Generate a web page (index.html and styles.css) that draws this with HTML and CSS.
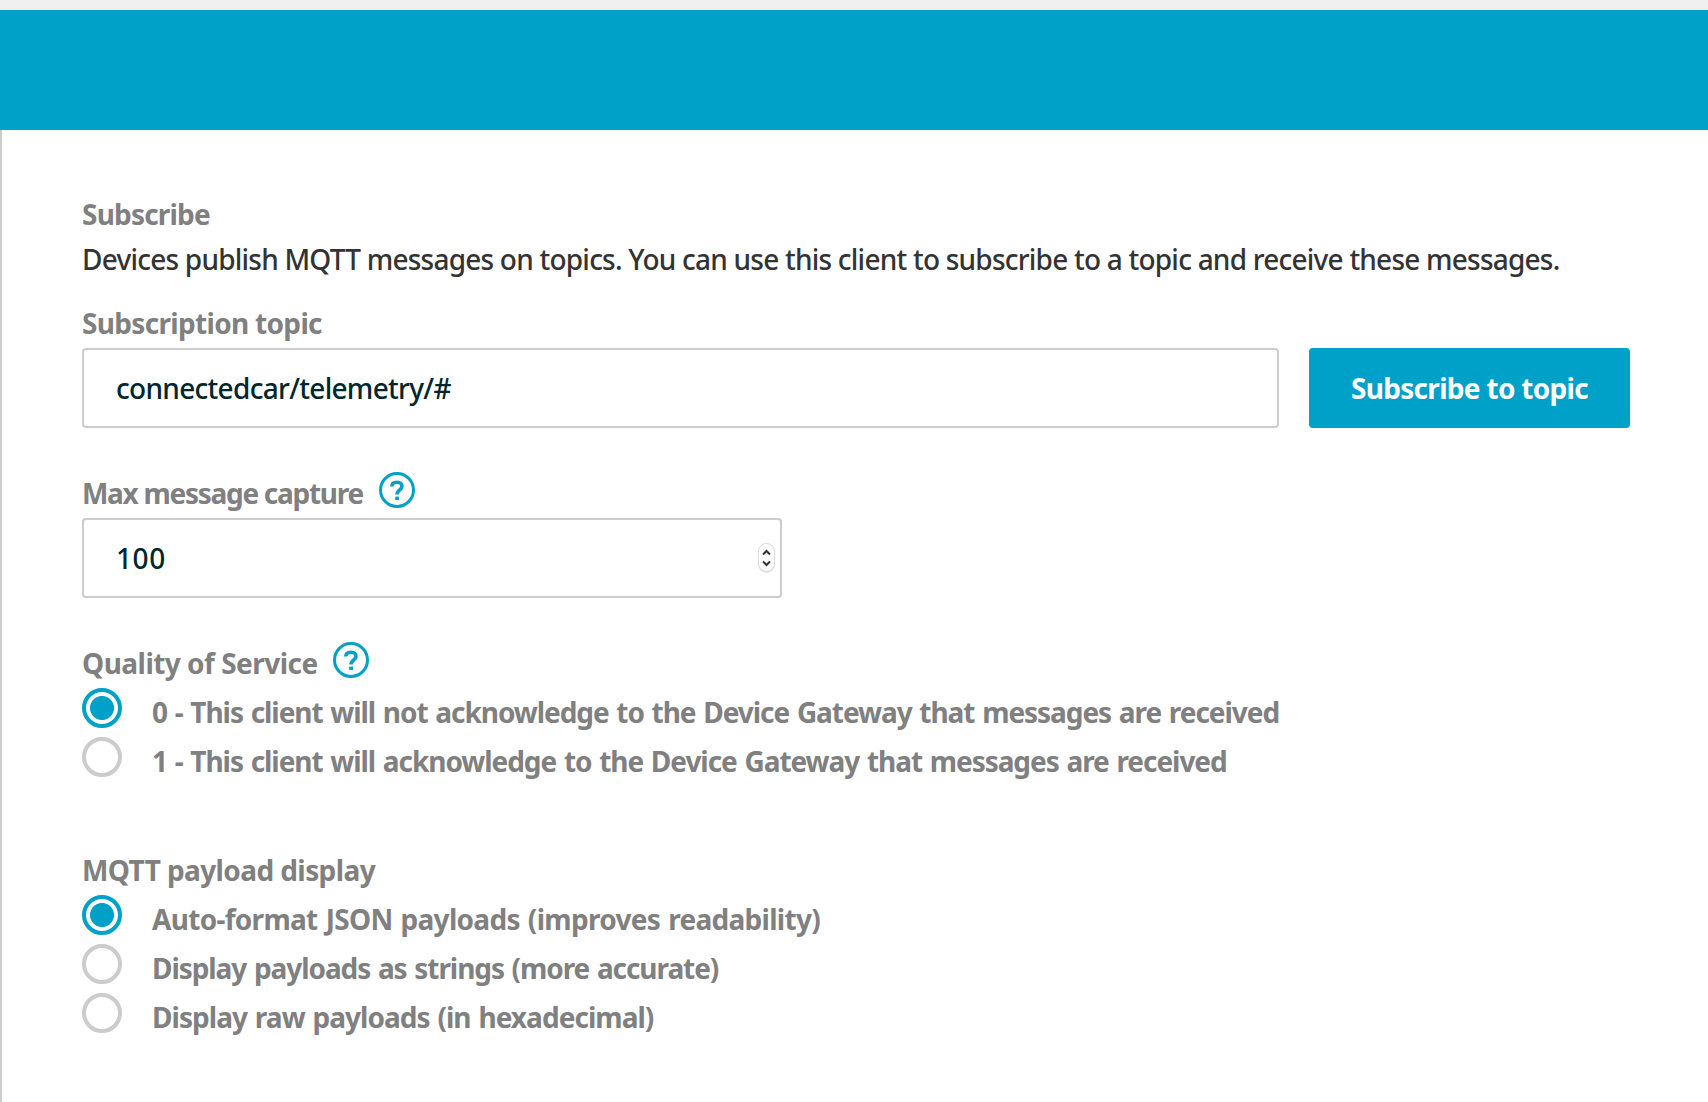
FILE: index.html
```
<!DOCTYPE html>
<html lang="en">
<head>
<meta charset="utf-8">
<title>MQTT client</title>
<link rel="stylesheet" href="styles.css">
</head>
<body>
<div class="topbar"></div>
<div class="banner"></div>
<main class="panel">
  <h2 class="label ls-subscribe">Subscribe</h2>
  <p class="intro">Devices publish MQTT messages on topics. You can use this client to subscribe to a topic and receive these messages.</p>

  <div class="label topic-label">Subscription topic</div>
  <div class="topic-row">
    <div class="field topic-field">connectedcar/telemetry/#</div>
    <button class="button" type="button">Subscribe to topic</button>
  </div>

  <div class="label-row">
    <div class="label max-label">Max message capture</div>
    <svg class="help" viewBox="0 0 36 36"><circle cx="18" cy="18" r="16.5"/><path d="M12.8 14.4C12.8 11.6 15 10.2 17.9 10.2C21 10.2 23 11.8 23 14.3C23 18 18 17.7 18 22.6"/><rect x="16.2" y="24.6" width="3.8" height="3.4"/></svg>
  </div>
  <div class="field number-field">
    <span class="number">100</span>
    <svg class="stepper" viewBox="0 0 15 27"><path d="M4 10.5L7.5 7L11 10.5M4 17.5L7.5 21L11 17.5"/></svg>
  </div>

  <div class="label-row">
    <div class="label qos-label">Quality of Service</div>
    <svg class="help" viewBox="0 0 36 36"><circle cx="18" cy="18" r="16.5"/><path d="M12.8 14.4C12.8 11.6 15 10.2 17.9 10.2C21 10.2 23 11.8 23 14.3C23 18 18 17.7 18 22.6"/><rect x="16.2" y="24.6" width="3.8" height="3.4"/></svg>
  </div>
  <div class="options">
    <div class="option"><span class="radio checked"></span><span class="text qos-0">0 - This client will not acknowledge to the Device Gateway that messages are received</span></div>
    <div class="option"><span class="radio"></span><span class="text qos-1">1 - This client will acknowledge to the Device Gateway that messages are received</span></div>
  </div>

  <div class="label payload-label">MQTT payload display</div>
  <div class="options">
    <div class="option"><span class="radio checked"></span><span class="text as-json">Auto-format JSON payloads (improves readability)</span></div>
    <div class="option"><span class="radio"></span><span class="text as-string">Display payloads as strings (more accurate)</span></div>
    <div class="option"><span class="radio"></span><span class="text as-hex">Display raw payloads (in hexadecimal)</span></div>
  </div>
</main>
</body>
</html>
```
FILE: styles.css
```
* { box-sizing: border-box; }

body {
  margin: 0;
  height: 1102px;
  display: flex;
  flex-direction: column;
  overflow: hidden;
  background: #fff;
  color: #333;
  font: 500 28px/40px "Noto Sans", sans-serif;
  white-space: nowrap;
}

.topbar { height: 10px; flex: none; background: #f0f0f0; }
.banner { height: 120px; flex: none; background: #00a1c9; }

.panel {
  flex: 1;
  padding: 64px 78px 0 80px;
  border-left: 2px solid #ccc;
}

.label {
  margin: 0;
  color: #808080;
  font-size: 28px;
  font-weight: 700;
}

.ls-subscribe { letter-spacing: -.8px; }
.intro { margin: 5px 0 0; letter-spacing: -.775px; }

.topic-label { margin: 24px 0 5px; letter-spacing: -.68px; }
.topic-row { display: flex; gap: 30px; }

.field {
  display: flex;
  align-items: center;
  height: 80px;
  padding-left: 32px;
  border: 2px solid #ccc;
  border-radius: 4px;
  background: #fff;
  color: #00262d;
}
.topic-field { flex: 1; letter-spacing: -.7px; }

.button {
  width: 321px;
  height: 80px;
  padding: 0;
  border: 0;
  border-radius: 4px;
  background: #00a1c9;
  color: #fff;
  font: 700 28px/40px "Noto Sans", sans-serif;
  letter-spacing: -.7px;
}

.label-row { display: flex; height: 40px; margin: 45px 0 5px; }
.max-label { width: 297px; letter-spacing: -1.28px; }
.qos-label { width: 251px; letter-spacing: -.52px; }

.help { width: 36px; height: 36px; margin-top: -1px; fill: none; stroke: #00a1c9; stroke-width: 3; }
.help path { stroke-width: 3.6; }
.help rect { fill: #00a1c9; stroke: none; }

.number-field { width: 700px; justify-content: space-between; padding-right: 6px; }
.number { letter-spacing: .6px; }

.stepper {
  width: 15px;
  height: 27px;
  margin-bottom: 2px;
  border-radius: 8px;
  background: #fff;
  box-shadow: 0 0 0 1px #ddd, 0 1px 2px rgba(0, 0, 0, .3);
  fill: none;
  stroke: #333;
  stroke-width: 2;
}

.option { display: flex; height: 49px; }
.radio {
  width: 40px;
  height: 40px;
  margin-right: 30px;
  border: 4px solid #ccc;
  border-radius: 50%;
}
.radio.checked {
  border-color: #00a1c9;
  background: radial-gradient(circle, #00a1c9 11.6px, #fff 12.4px);
}
.text { color: #808080; font-weight: 700; line-height: 48px; word-spacing: 1.5px; }
.qos-0 { letter-spacing: -1.05px; }
.qos-1 { letter-spacing: -1.05px; }

.payload-label { margin: 64px 0 5px; letter-spacing: -.59px; }
.as-json { letter-spacing: -.7px; }
.as-string { letter-spacing: -1.07px; }
.as-hex { letter-spacing: -.96px; }
```
